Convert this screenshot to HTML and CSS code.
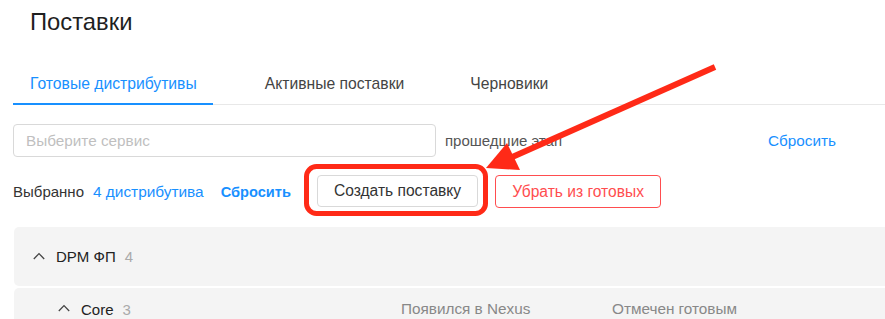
FILE: index.html
```html
<!DOCTYPE html>
<html>
<head>
  <title>Поставки</title>
  <meta charset="utf-8">
  <link rel="stylesheet" href="styles.css">
</head>
<body>
  <div class="page">
    <h1 class="title">Поставки</h1>

    <div class="tabs">
      <div class="tab active">Готовые дистрибутивы</div>
      <div class="tab">Активные поставки</div>
      <div class="tab">Черновики</div>
    </div>

    <div class="filters">
      <div class="select">Выберите сервис</div>
      <span class="stage">прошедшие этап</span>
      <a class="link reset">Сбросить</a>
    </div>

    <div class="selection">
      <span class="label">Выбранно</span>
      <a class="link count">4 дистрибутива</a>
      <a class="link strong">Сбросить</a>
      <button class="btn">Создать поставку</button>
      <button class="btn danger">Убрать из готовых</button>
    </div>

    <div class="group">
      <div class="group-head">
        <svg class="chev" width="12" height="8" viewBox="0 0 12 8"><polyline points="0.8,7 6,1.6 11.2,7" fill="none" stroke="#444" stroke-width="1.3"/></svg>
        <span class="name">DPM ФП</span>
        <span class="num">4</span>
      </div>
    </div>
    <div class="group sub">
      <div class="group-head">
        <div class="cell-name">
          <svg class="chev" width="12" height="8" viewBox="0 0 12 8"><polyline points="0.8,7 6,1.6 11.2,7" fill="none" stroke="#444" stroke-width="1.3"/></svg>
          <span class="name">Core</span>
          <span class="num">3</span>
        </div>
        <span class="col col-nexus">Появился в Nexus</span>
        <span class="col">Отмечен готовым</span>
      </div>
    </div>
  </div>

  <!-- annotation on top of the screenshot -->
  <svg class="annot" width="885" height="319" viewBox="0 0 885 319">
    <rect x="306.5" y="166.5" width="179" height="47" rx="10" fill="none" stroke="#ff2a17" stroke-width="5"/>
    <line x1="715" y1="67" x2="510" y2="158" stroke="#ff2a17" stroke-width="6"/>
    <polygon points="486,168 507,143 520,170" fill="#ff2a17"/>
  </svg>
</body>
</html>
```

FILE: styles.css
```css
* { box-sizing: border-box; }
body { margin: 0; font-family: 'Liberation Sans', Arial, sans-serif; color: #333; background: #fff; overflow: hidden; }
.page { padding: 0 0 0 13px; }

.title { font-size: 23.8px; font-weight: 500; color: #1f1f1f; margin: 0; padding: 8px 0 0 17px; height: 64px; }

.tabs { display: flex; border-bottom: 1px solid #e8e8e8; height: 41px; }
.tab { padding: 0 16px 0 17px; margin-right: 35px; font-size: 15.7px; color: #444; line-height: 39px; }
.tab:nth-child(2) { margin-right: 33px; }
.tab.active { color: #1890ff; border-bottom: 2px solid #1890ff; margin-bottom: -1px; }

.filters { display: flex; align-items: center; margin-top: 19px; height: 33px; }
.select { width: 423px; height: 33px; border: 1px solid #d9d9d9; border-radius: 4px; padding: 0 12px; line-height: 31px; font-size: 15.3px; color: #bfbfbf; }
.stage { margin-left: 9px; font-size: 15px; color: #555; }
.link { color: #1890ff; font-size: 15px; }
.reset { margin-left: 206px; font-size: 15.3px; }

.selection { display: flex; align-items: center; margin-top: 18px; height: 33px; font-size: 15px; }
.label { color: #333; }
.count { margin-left: 9px; font-size: 15.4px; }
.strong { margin-left: 17px; font-weight: 600; font-size: 14.6px; }
.btn { font-family: inherit; font-size: 15.6px; height: 32px; border: 1px solid #d9d9d9; background: #fff; color: #333; border-radius: 4px; padding: 0 16px; margin-left: 26px; margin-top: -2px; }
.btn.danger { border-color: #ff4d4f; color: #ff4d4f; margin-left: 17px; padding: 0 16px; margin-top: 0; height: 33px; }

.group { background: #f4f4f4; border-radius: 5px 0 0 5px; margin: 19px 0 0 1px; height: 59px; }
.group-head { display: flex; align-items: center; height: 59px; padding-left: 19px; font-size: 15px; }
.chev { display: block; margin-right: 11px; margin-top: -2px; }
.name { color: #222; font-weight: 500; }
.num { color: #aaa; margin-left: 9px; }
.group.sub { margin-top: 2px; }
.group.sub .group-head { padding-left: 44px; height: 42px; }
.cell-name { display: flex; align-items: center; width: 343px; }
.col { color: #888; font-size: 15.3px; }
.col-nexus { width: 211px; }

.annot { position: absolute; left: 0; top: 0; pointer-events: none; }
```
